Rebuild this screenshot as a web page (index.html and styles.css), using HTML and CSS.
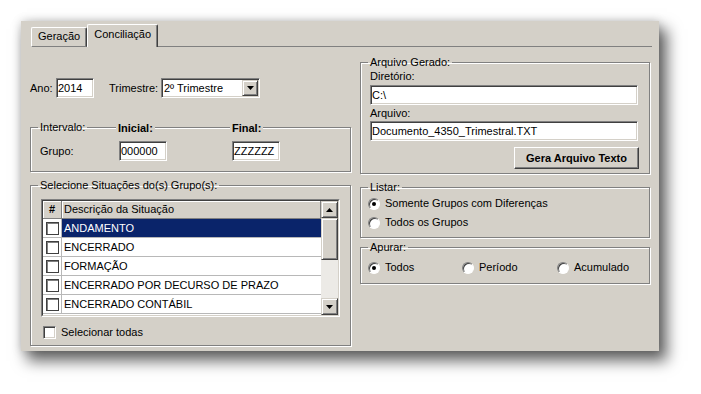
FILE: index.html
```html
<!DOCTYPE html>
<html lang="pt-BR">
<head>
  <meta charset="UTF-8">
  <title>Conciliação</title>
  <link rel="stylesheet" href="styles.css">
</head>
<body>

  <div class="window">
    <div class="tabs">
      <div class="tab">Geração</div>
      <div class="tab tab-active">Conciliação</div>
      <div class="tab-rest"></div>
    </div>

    <div class="page">
      <div class="col-left">
        <div class="ano-row">
          <label class="lbl-ano">Ano:</label>
          <input class="field field-ano" type="text" value="2014">
          <label class="lbl-tri">Trimestre:</label>
          <div class="combo">
            <span class="combo-text">2º Trimestre</span>
            <span class="btn3d combo-btn">
              <svg width="7" height="4" viewBox="0 0 7 4"><path d="M0 0h7L3.5 4z"/></svg>
            </span>
          </div>
        </div>

        <fieldset class="group group-intervalo">
          <legend>Intervalo:</legend>
          <span class="col-head head-inicial">Inicial:</span>
          <span class="col-head head-final">Final:</span>
          <div class="grupo-row">
            <span>Grupo:</span>
            <input class="field field-grupo" type="text" value="000000">
            <span></span>
            <input class="field field-grupo" type="text" value="ZZZZZZ">
          </div>
        </fieldset>

        <fieldset class="group group-situacoes">
          <legend>Selecione Situações do(s) Grupo(s):</legend>
          <div class="grid">
            <div class="grid-inner">
              <div class="grid-table">
                <div class="grid-row grid-head">
                  <div class="cell-check head-cell">#</div>
                  <div class="cell-desc head-cell">Descrição da Situação</div>
                </div>
                <div class="grid-row selected">
                  <div class="cell-check"><span class="flat-check"></span></div>
                  <div class="cell-desc">ANDAMENTO</div>
                </div>
                <div class="grid-row">
                  <div class="cell-check"><span class="flat-check"></span></div>
                  <div class="cell-desc">ENCERRADO</div>
                </div>
                <div class="grid-row">
                  <div class="cell-check"><span class="flat-check"></span></div>
                  <div class="cell-desc">FORMAÇÃO</div>
                </div>
                <div class="grid-row">
                  <div class="cell-check"><span class="flat-check"></span></div>
                  <div class="cell-desc">ENCERRADO POR DECURSO DE PRAZO</div>
                </div>
                <div class="grid-row">
                  <div class="cell-check"><span class="flat-check"></span></div>
                  <div class="cell-desc">ENCERRADO CONTÁBIL</div>
                </div>
              </div>
              <div class="scrollbar">
                <span class="btn3d sb-btn">
                  <svg width="7" height="4" viewBox="0 0 7 4"><path d="M0 4h7L3.5 0z"/></svg>
                </span>
                <span class="btn3d sb-thumb"></span>
                <span class="sb-track"></span>
                <span class="btn3d sb-btn">
                  <svg width="7" height="4" viewBox="0 0 7 4"><path d="M0 0h7L3.5 4z"/></svg>
                </span>
              </div>
            </div>
          </div>
          <label class="check-all"><span class="check3d"></span>Selecionar todas</label>
        </fieldset>
      </div>

      <div class="col-right">
        <fieldset class="group group-arquivo">
          <legend>Arquivo Gerado:</legend>
          <div class="lbl-field">Diretório:</div>
          <input class="field field-wide" type="text" value="C:\">
          <div class="lbl-field lbl-arquivo">Arquivo:</div>
          <input class="field field-wide field-doc" type="text" value="Documento_4350_Trimestral.TXT">
          <button class="btn3d btn-gera" type="button">Gera Arquivo Texto</button>
        </fieldset>

        <fieldset class="group group-listar">
          <legend>Listar:</legend>
          <label class="radio-row"><span class="radio checked"></span>Somente Grupos com Diferenças</label>
          <label class="radio-row"><span class="radio"></span>Todos os Grupos</label>
        </fieldset>

        <fieldset class="group group-apurar">
          <legend>Apurar:</legend>
          <div class="apurar-row">
            <label class="radio-row"><span class="radio checked"></span>Todos</label>
            <label class="radio-row"><span class="radio"></span>Período</label>
            <label class="radio-row"><span class="radio"></span>Acumulado</label>
          </div>
        </fieldset>
      </div>
    </div>
  </div>

</body>
</html>
```

FILE: styles.css
```css
html, body {
  height: 100%;
}
body {
  margin: 0;
  background-color: #FFFFFF;
  font-family: "Liberation Sans", Arial, sans-serif;
  font-size: 11px;
  line-height: 13px;
  color: #000000;
  overflow: hidden;
}
.window {
  box-sizing: border-box;
  width: 638px;
  height: 330px;
  margin: 21px 0 0 21px;
  padding-top: 3px;
  background-color: #D4D0C8;
  box-shadow: 7px 9px 14px 1px rgba(0, 0, 0, 0.6), 0 0 9px rgba(0, 0, 0, 0.18);
}

/* tabs */
.tabs {
  display: flex;
  align-items: flex-end;
  height: 23px;
  margin: 0 7px 0 10px;
}
.tab {
  box-sizing: border-box;
  height: 20px;
  padding: 2px 6px 0;
  border: 1px solid;
  border-color: #FFFFFF #404040 #808080 #FFFFFF;
  box-shadow: inset -1px 0 #808080;
  border-radius: 2px 2px 0 0;
}
.tab-active {
  height: 23px;
  padding-top: 3px;
  border-bottom: none;
}
.tab-rest {
  flex: 1;
  box-sizing: border-box;
  height: 100%;
  border-bottom: 1px solid #808080;
}

.page {
  display: flex;
  gap: 9px;
  padding: 9px 0 0 9px;
}
.col-left {
  width: 321px;
}
.col-right {
  width: 290px;
}

/* sunken fields */
.field {
  box-sizing: border-box;
  height: 20px;
  margin: 0;
  padding: 0 1px;
  border: 1px solid;
  border-color: #808080 #FFFFFF #FFFFFF #808080;
  box-shadow: inset 1px 1px #404040, inset -1px -1px #D4D0C8;
  background-color: #FFFFFF;
  font: inherit;
  color: #000000;
  outline: none;
}
.btn3d {
  box-sizing: border-box;
  background-color: #D4D0C8;
  border: 1px solid;
  border-color: #D4D0C8 #404040 #404040 #D4D0C8;
  box-shadow: inset 1px 1px #FFFFFF, inset -1px -1px #808080;
}

.ano-row {
  display: flex;
  align-items: center;
  height: 20px;
  margin-top: 22px;
}
.lbl-ano {
  width: 26px;
}
.field-ano {
  width: 38px;
}
.lbl-tri {
  width: 52px;
  margin-left: 15px;
}
.combo {
  display: flex;
  box-sizing: border-box;
  width: 99px;
  height: 20px;
  padding: 1px;
  border: 1px solid;
  border-color: #808080 #FFFFFF #FFFFFF #808080;
  box-shadow: inset 1px 1px #404040, inset -1px -1px #D4D0C8;
  background-color: #FFFFFF;
}
.combo-text {
  flex: 1;
  padding-left: 1px;
  line-height: 16px;
}
.combo-btn {
  display: flex;
  align-items: center;
  justify-content: center;
  width: 16px;
  height: 16px;
}

/* group boxes */
.group {
  position: relative;
  margin: 0;
  padding: 0 10px 0 9px;
  min-width: 0;
  border: 1px solid #808080;
  box-shadow: inset 1px 1px #FFFFFF, 1px 1px #FFFFFF;
}
.group legend {
  padding: 0 2px;
  margin-left: -2px;
  line-height: 13px;
}

.group-intervalo {
  margin-top: 23px;
  padding-top: 7px;
  padding-bottom: 10px;
}
.col-head {
  position: absolute;
  top: -12px;
  padding: 0 2px;
  background-color: #D4D0C8;
  font-weight: bold;
}
.head-inicial {
  left: 85px;
}
.head-final {
  left: 199px;
}
.grupo-row {
  display: grid;
  grid-template-columns: 79px 48px 65px 48px;
  align-items: center;
}
.field-grupo {
  width: 48px;
}

.group-situacoes {
  margin-top: 7px;
  padding-top: 7px;
  padding-bottom: 6px;
}
.grid {
  box-sizing: border-box;
  width: 299px;
  height: 118px;
  margin-left: 1px;
  border: 1px solid;
  border-color: #808080 #FFFFFF #FFFFFF #808080;
}
.grid-inner {
  display: flex;
  height: 100%;
  box-sizing: border-box;
  border: 1px solid;
  border-color: #404040 #D4D0C8 #D4D0C8 #404040;
  background-color: #FFFFFF;
}
.grid-table {
  flex: 1;
}
.grid-row {
  display: flex;
  height: 19px;
}
.cell-check,
.cell-desc {
  box-sizing: border-box;
  display: flex;
  align-items: center;
  border-bottom: 1px solid #B8B8B8;
}
.cell-check {
  justify-content: center;
  width: 19px;
  border-right: 1px solid #B8B8B8;
}
.cell-desc {
  flex: 1;
  padding-left: 2px;
}
.grid-head {
  height: 18px;
}
.head-cell {
  background-color: #D4D0C8;
  border-right: 1px solid #808080;
  border-bottom: 1px solid #808080;
  box-shadow: inset 1px 1px #FFFFFF;
}
.grid-head .cell-check {
  font-weight: bold;
}
.selected .cell-desc {
  background-color: #0A246A;
  color: #FFFFFF;
}
.flat-check {
  box-sizing: border-box;
  width: 13px;
  height: 13px;
  border: 1px solid #404040;
  box-shadow: inset 1px 1px #808080;
  background-color: #FFFFFF;
}
.scrollbar {
  display: flex;
  flex-direction: column;
  width: 17px;
}
.sb-btn {
  display: flex;
  align-items: center;
  justify-content: center;
  height: 17px;
}
.sb-thumb {
  height: 42px;
}
.sb-track {
  flex: 1;
  background-color: #ECEAE6;
}
.check-all {
  display: flex;
  align-items: center;
  gap: 5px;
  height: 13px;
  margin: 9px 0 0 3px;
}
.check3d {
  box-sizing: border-box;
  width: 13px;
  height: 13px;
  border: 1px solid;
  border-color: #808080 #FFFFFF #FFFFFF #808080;
  box-shadow: inset 1px 1px #404040, inset -1px -1px #D4D0C8;
  background-color: #FFFFFF;
}

/* right column */
.group-arquivo {
  padding: 1px 11px 4px 9px;
}
.lbl-field {
  height: 13px;
}
.field-wide {
  display: block;
  width: 100%;
  margin-top: 2px;
}
.lbl-arquivo {
  margin-top: 2px;
}
.field-doc {
  margin-top: 1px;
}
.btn-gera {
  display: block;
  width: 125px;
  height: 22px;
  margin: 6px -1px 0 auto;
  padding: 0;
  border-color: #FFFFFF #404040 #404040 #FFFFFF;
  box-shadow: inset -1px -1px #808080;
  font: inherit;
  font-weight: bold;
  color: #000000;
}

.group-listar {
  margin-top: 7px;
  padding-bottom: 5px;
}
.group-apurar {
  margin-top: 3px;
  padding-top: 4px;
  padding-bottom: 6px;
}
.apurar-row {
  display: grid;
  grid-template-columns: 94px 95px auto;
}
.radio-row {
  display: flex;
  align-items: center;
  gap: 5px;
  height: 19px;
  margin-left: -2px;
}
.radio {
  position: relative;
  box-sizing: border-box;
  width: 12px;
  height: 12px;
  border-radius: 50%;
  border: 1px solid;
  border-color: #808080 #FFFFFF #FFFFFF #808080;
  box-shadow: inset 1px 1px #404040;
  background-color: #FFFFFF;
}
.radio.checked::after {
  content: "";
  position: absolute;
  left: 3px;
  top: 3px;
  width: 4px;
  height: 4px;
  border-radius: 50%;
  background-color: #000000;
}
```
